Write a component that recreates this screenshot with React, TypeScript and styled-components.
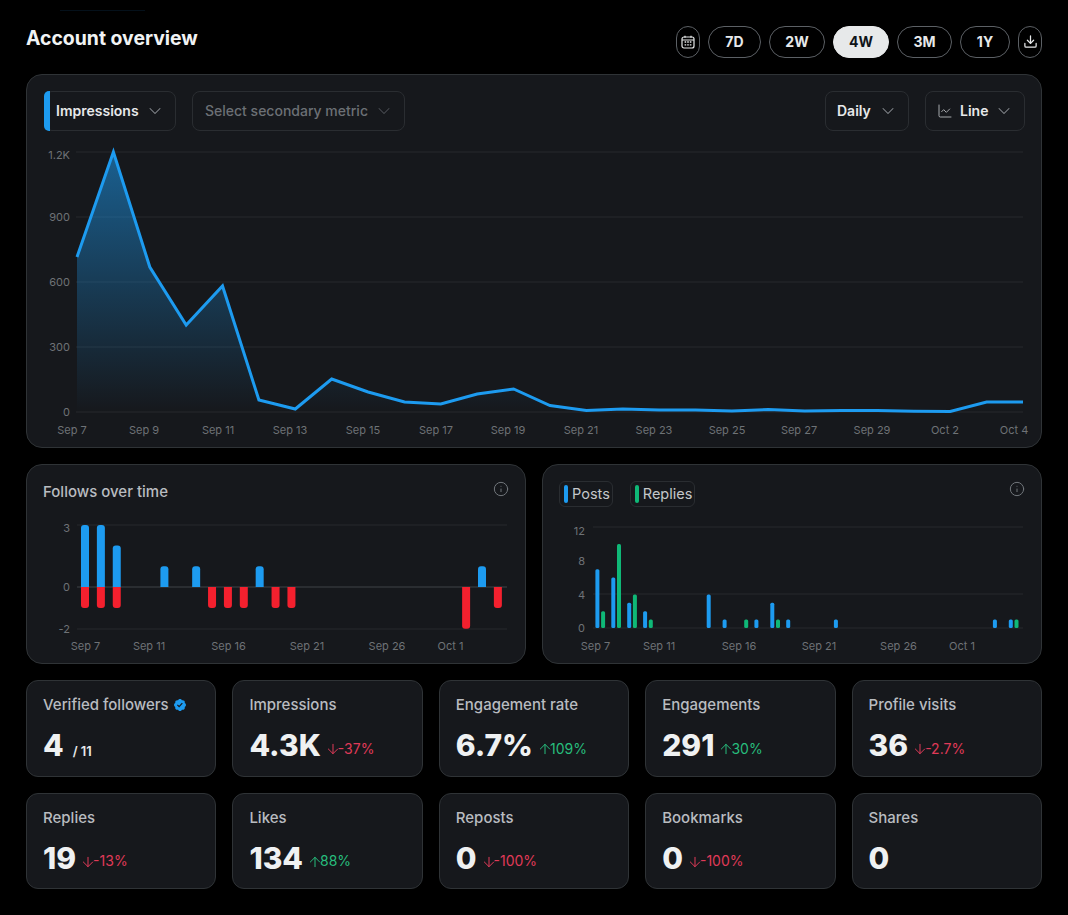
import React from "react";
import styled, { createGlobalStyle } from "styled-components";
import { ArrowDown, ArrowUp, ChartLine, ChevronDown, Download, Info } from "lucide-react";

const Global = createGlobalStyle`
  html, body { margin: 0; padding: 0; background: #000; }
  body { font-family: Inter, "Liberation Sans", sans-serif; color: #e7e9ea; -webkit-font-smoothing: auto; }
  * { box-sizing: border-box; }
`;

const Page = styled.main`
  width: 1068px;
  min-height: 915px;
  padding: 10px 26px 0;
  background: #000;
`;
const TopGlow = styled.div`
  width: 85px;
  height: 1px;
  margin: 0 0 15px 34px;
  background: #04101a;
`;
const Header = styled.header`
  display: flex;
  justify-content: space-between;
  align-items: flex-start;
  height: 32px;
  margin-bottom: 16px;
`;
const Title = styled.h1`
  margin: 0;
  font-size: 19.4px;
  line-height: 24px;
  font-weight: 700;
  color: #f1f3f4;
`;
const Range = styled.nav`
  display: flex;
  gap: 8px;
`;
const Pill = styled.button<{ $active?: boolean; $w: number }>`
  width: ${(p) => p.$w}px;
  height: 32px;
  padding: 0 0 1px;
  display: flex;
  align-items: center;
  justify-content: center;
  border-radius: 16px;
  border: 1px solid ${(p) => (p.$active ? "#e7e9ea" : "#5c6065")};
  background: ${(p) => (p.$active ? "#e7e9ea" : "#000")};
  color: ${(p) => (p.$active ? "#0f1419" : "#e7e9ea")};
  font: 700 14px Inter, "Liberation Sans", sans-serif;
`;
const Card = styled.section`
  background: #16181c;
  border: 1px solid #2f3336;
  border-radius: 16px;
`;
const MainCard = styled(Card)`
  height: 374px;
  margin-bottom: 16px;
`;
const Toolbar = styled.div`
  display: flex;
  justify-content: space-between;
  padding: 16px 16px 0 17px;
`;
const ToolGroup = styled.div`
  display: flex;
  gap: 16px;
`;
const Select = styled.div<{ $w: number; $muted?: boolean }>`
  position: relative;
  width: ${(p) => p.$w}px;
  height: 40px;
  display: flex;
  align-items: center;
  justify-content: space-between;
  padding: 0 10px 1px ${(p) => (p.$muted ? 12 : 11)}px;
  border: 1px solid #2a2d31;
  border-radius: 8px;
  font-size: 14px;
  font-weight: ${(p) => (p.$muted ? 500 : 600)};
  color: ${(p) => (p.$muted ? "#6c7075" : "#e7e9ea")};
  & > svg { color: ${(p) => (p.$muted ? "#4b4f54" : "#8b8f94")}; flex: none; }
`;
const Stripe = styled.span`
  position: absolute;
  left: -1px;
  top: -1px;
  bottom: -1px;
  width: 6px;
  background: #1d9bf0;
  border-radius: 5px 0 0 5px;
`;
const SelectLabel = styled.span`
  display: flex;
  align-items: center;
  gap: 7px;
  svg { color: #c4c7ca; }
`;
const ChartSvg = styled.svg`
  display: block;
`;
const AxisLabel = styled.text`
  font-family: Inter, "Liberation Sans", sans-serif;
  font-size: 11px;
  fill: #6e7276;
`;
const ChartRow = styled.div`
  display: grid;
  grid-template-columns: 500px 500px;
  gap: 16px;
  margin-bottom: 16px;
`;
const ChartCard = styled(Card)`
  height: 200px;
`;
const ChartHead = styled.div`
  height: 45px;
  display: flex;
  justify-content: space-between;
  align-items: flex-start;
  padding: 16px 16px 0 16px;
  & > svg { color: #71767b; flex: none; }
`;
const ChartTitle = styled.h2`
  margin: 2px 0 0;
  font-size: 15px;
  line-height: 18px;
  font-weight: 500;
  color: #b9bcc0;
`;
const Legend = styled.div`
  display: flex;
  gap: 17px;
`;
const Chip = styled.span`
  height: 26px;
  display: flex;
  align-items: center;
  gap: 4px;
  padding: 0 2px 1px 4px;
  border: 1px solid #2a2d31;
  border-radius: 6px;
  font-size: 14.5px;
  color: #c4c7ca;
`;
const ChipMark = styled.i<{ $color: string }>`
  width: 4px;
  height: 18px;
  border-radius: 2px;
  background: ${(p) => p.$color};
`;
const StatGrid = styled.div`
  display: grid;
  grid-template-columns: repeat(5, 1fr);
  grid-auto-rows: 96.5px;
  gap: 16px;
`;
const Stat = styled(Card)`
  padding: 14px 16px;
  border-radius: 12px;
`;
const StatLabel = styled.div`
  display: flex;
  align-items: center;
  gap: 4px;
  font-size: 15px;
  line-height: 20px;
  font-weight: 500;
  color: #b9bcc0;
`;
const StatRow = styled.div`
  display: flex;
  align-items: baseline;
  gap: 6px;
  margin-top: 10px;
`;
const StatValue = styled.span`
  font-size: 30px;
  line-height: 40px;
  font-weight: 800;
  color: #eff1f2;
`;
const StatTotal = styled.span`
  margin-left: 3px;
  font-size: 13px;
  font-weight: 600;
  color: #e7e9ea;
`;
const Delta = styled.span<{ $up: boolean }>`
  display: inline-flex;
  align-items: center;
  font-size: 14px;
  color: ${(p) => (p.$up ? "#27bd7d" : "#e03a58")};
  svg { margin: -2px -3px -2px -2px; position: relative; top: 1px; }
`;

const CalendarIcon = () => (
  <svg width="14" height="14" viewBox="0 0 14 14" fill="none" stroke="#e7e9ea" strokeWidth="1.2">
    <rect x="1" y="2" width="12" height="11" rx="2" />
    <path d="M4 .8v2M10 .8v2M1 5h12" />
    <path d="M3.6 7h1.6M6.2 7h1.6M8.8 7h1.6M3.6 9.8h1.6M6.2 9.8h1.6M8.8 9.8h1.6" strokeWidth="1.3" />
  </svg>
);
const VerifiedIcon = () => (
  <svg width="14" height="14" viewBox="0 0 24 24" fill="#1d9bf0">
    <path d="M22.25 12c0-1.43-.88-2.67-2.19-3.34.46-1.39.2-2.9-.81-3.91s-2.52-1.27-3.91-.81c-.66-1.31-1.91-2.19-3.34-2.19s-2.67.88-3.33 2.19c-1.4-.46-2.91-.2-3.92.81s-1.26 2.52-.8 3.91c-1.31.67-2.2 1.91-2.2 3.34s.89 2.67 2.2 3.34c-.46 1.39-.21 2.9.8 3.91s2.52 1.26 3.91.81c.67 1.31 1.91 2.19 3.34 2.19s2.68-.88 3.34-2.19c1.39.45 2.9.2 3.91-.81s1.27-2.52.81-3.91c1.31-.67 2.19-1.91 2.19-3.34zm-11.71 4.2L6.8 12.46l1.41-1.42 2.26 2.26 4.8-5.23 1.47 1.36-6.2 6.77z" />
  </svg>
);

const lineYs = [257, 152, 267, 325, 286, 400, 409, 379, 392, 402, 404, 394, 389, 405.5, 410.5, 409, 410, 410, 411, 409.5, 411, 410.5, 410.5, 411.3, 411.5, 402, 402];
const linePts = lineYs.map((y, i) => `${(77 + i * 36.385).toFixed(1)},${y}`).join(" ");
const mainY: [string, number][] = [["1.2K", 159], ["900", 221], ["600", 286], ["300", 351], ["0", 416]];
const mainX: [string, number][] = [["Sep 7", 72], ["Sep 9", 144], ["Sep 11", 218], ["Sep 13", 290], ["Sep 15", 363], ["Sep 17", 436], ["Sep 19", 508], ["Sep 21", 581], ["Sep 23", 654], ["Sep 25", 727], ["Sep 27", 799], ["Sep 29", 872], ["Oct 2", 945], ["Oct 4", 1014]];

const MainChart = () => (
  <ChartSvg width="1014" height="316" viewBox="27 131 1014 316">
    <defs>
      <linearGradient id="area" gradientUnits="userSpaceOnUse" x1="0" y1="152" x2="0" y2="412">
        <stop offset="0" stopColor="#1d9bf0" stopOpacity="0.55" />
        <stop offset="1" stopColor="#1d9bf0" stopOpacity="0" />
      </linearGradient>
    </defs>
    {[152, 217, 282, 347, 412].map((y) => (
      <line key={y} x1="76" x2="1023" y1={y} y2={y} stroke="#26292d" />
    ))}
    {mainY.map(([t, y]) => (
      <AxisLabel key={t} x="70" y={y} textAnchor="end">{t}</AxisLabel>
    ))}
    {mainX.map(([t, x]) => (
      <AxisLabel key={t} x={x} y="434" textAnchor="middle">{t}</AxisLabel>
    ))}
    <polygon points={`77,412 ${linePts} 1023,412`} fill="url(#area)" />
    <polyline points={linePts} fill="none" stroke="#1d9bf0" strokeWidth="3" strokeLinejoin="miter" />
  </ChartSvg>
);

const barTop = (x: number, y0: number, h: number, w: number, r: number) =>
  `M${x} ${y0}V${y0 - h + r}Q${x} ${y0 - h} ${x + r} ${y0 - h}H${x + w - r}Q${x + w} ${y0 - h} ${x + w} ${y0 - h + r}V${y0}Z`;
const barBottom = (x: number, y0: number, h: number, w: number, r: number) =>
  `M${x} ${y0}V${y0 + h - r}Q${x} ${y0 + h} ${x + r} ${y0 + h}H${x + w - r}Q${x + w} ${y0 + h} ${x + w} ${y0 + h - r}V${y0}Z`;

const followsUp: [number, number][] = [[0, 3], [1, 3], [2, 2], [5, 1], [7, 1], [11, 1], [25, 1]];
const followsDown: [number, number][] = [[0, 1], [1, 1], [2, 1], [8, 1], [9, 1], [10, 1], [12, 1], [13, 1], [24, 2], [26, 1]];
const followsX: [string, number][] = [["Sep 7", 85.5], ["Sep 11", 149], ["Sep 16", 228.5], ["Sep 21", 307], ["Sep 26", 387], ["Oct 1", 450.5]];

const FollowsChart = () => (
  <ChartSvg width="498" height="153" viewBox="27 510 498 153">
    <line x1="77" x2="507" y1="525" y2="525" stroke="#26292d" />
    <line x1="77" x2="507" y1="629" y2="629" stroke="#26292d" />
    <line x1="77" x2="507" y1="587" y2="587" stroke="#3f4246" />
    <AxisLabel x="70" y="532" textAnchor="end">3</AxisLabel>
    <AxisLabel x="70" y="591" textAnchor="end">0</AxisLabel>
    <AxisLabel x="70" y="633" textAnchor="end">-2</AxisLabel>
    {followsX.map(([t, x]) => (
      <AxisLabel key={t} x={x} y="650" textAnchor="middle">{t}</AxisLabel>
    ))}
    {followsUp.map(([i, v]) => (
      <path key={i} d={barTop(81 + i * 15.88, 587, v * 20.7, 8, 3)} fill="#1d9bf0" />
    ))}
    {followsDown.map(([i, v]) => (
      <path key={i} d={barBottom(81 + i * 15.88, 587, v * 20.9, 8, 3)} fill="#f4202e" />
    ))}
  </ChartSvg>
);

const posts: [number, number][] = [[0, 7], [1, 6], [2, 3], [3, 2], [7, 4], [8, 1], [10, 1], [11, 3], [12, 1], [15, 1], [25, 1], [26, 1]];
const replies: [number, number][] = [[0, 2], [1, 10], [2, 4], [3, 1], [9, 1], [11, 1], [26, 1]];
const postsX: [string, number][] = [["Sep 7", 595.5], ["Sep 11", 659], ["Sep 16", 739], ["Sep 21", 819], ["Sep 26", 898.5], ["Oct 1", 962]];

const PostsChart = () => (
  <ChartSvg width="498" height="153" viewBox="543 510 498 153">
    {[527, 594, 628].map((y) => (
      <line key={y} x1="593" x2="1023" y1={y} y2={y} stroke="#26292d" />
    ))}
    <AxisLabel x="585" y="535" textAnchor="end">12</AxisLabel>
    <AxisLabel x="585" y="565" textAnchor="end">8</AxisLabel>
    <AxisLabel x="585" y="599" textAnchor="end">4</AxisLabel>
    <AxisLabel x="585" y="632" textAnchor="end">0</AxisLabel>
    {postsX.map(([t, x]) => (
      <AxisLabel key={t} x={x} y="650" textAnchor="middle">{t}</AxisLabel>
    ))}
    {posts.map(([i, v]) => (
      <rect key={i} x={595.4 + i * 15.9} y={628 - v * 8.4} width="4" height={v * 8.4} rx="1.5" fill="#1d9bf0" />
    ))}
    {replies.map(([i, v]) => (
      <rect key={i} x={601.1 + i * 15.9} y={628 - v * 8.4} width="4" height={v * 8.4} rx="1.5" fill="#0fb877" />
    ))}
  </ChartSvg>
);

type StatData = { label: string; value: string; delta?: string; up?: boolean; total?: string; badge?: boolean };
const stats: StatData[] = [
  { label: "Verified followers", value: "4", total: "/ 11", badge: true },
  { label: "Impressions", value: "4.3K", delta: "-37%", up: false },
  { label: "Engagement rate", value: "6.7%", delta: "109%", up: true },
  { label: "Engagements", value: "291", delta: "30%", up: true },
  { label: "Profile visits", value: "36", delta: "-2.7%", up: false },
  { label: "Replies", value: "19", delta: "-13%", up: false },
  { label: "Likes", value: "134", delta: "88%", up: true },
  { label: "Reposts", value: "0", delta: "-100%", up: false },
  { label: "Bookmarks", value: "0", delta: "-100%", up: false },
  { label: "Shares", value: "0" },
];

const ranges: [string, number][] = [["7D", 53], ["2W", 56], ["4W", 56], ["3M", 55], ["1Y", 50]];

export default function App() {
  return (
    <Page>
      <Global />
      <TopGlow />
      <Header>
        <Title>Account overview</Title>
        <Range>
          <Pill $w={24} aria-label="Calendar"><CalendarIcon /></Pill>
          {ranges.map(([r, w]) => (
            <Pill key={r} $w={w} $active={r === "4W"}>{r}</Pill>
          ))}
          <Pill $w={24} aria-label="Download"><Download size={15} strokeWidth={2} /></Pill>
        </Range>
      </Header>

      <MainCard>
        <Toolbar>
          <ToolGroup>
            <Select $w={132}>
              <Stripe />
              <SelectLabel>Impressions</SelectLabel>
              <ChevronDown size={20} strokeWidth={1.25} />
            </Select>
            <Select $w={213} $muted>
              <SelectLabel>Select secondary metric</SelectLabel>
              <ChevronDown size={20} strokeWidth={1.25} />
            </Select>
          </ToolGroup>
          <ToolGroup>
            <Select $w={84}>
              <SelectLabel>Daily</SelectLabel>
              <ChevronDown size={20} strokeWidth={1.25} />
            </Select>
            <Select $w={100}>
              <SelectLabel><ChartLine size={16} strokeWidth={1.25} />Line</SelectLabel>
              <ChevronDown size={20} strokeWidth={1.25} />
            </Select>
          </ToolGroup>
        </Toolbar>
        <MainChart />
      </MainCard>

      <ChartRow>
        <ChartCard>
          <ChartHead>
            <ChartTitle>Follows over time</ChartTitle>
            <Info size={16} strokeWidth={1.5} />
          </ChartHead>
          <FollowsChart />
        </ChartCard>
        <ChartCard>
          <ChartHead>
            <Legend>
              <Chip><ChipMark $color="#1d9bf0" />Posts</Chip>
              <Chip><ChipMark $color="#0fb877" />Replies</Chip>
            </Legend>
            <Info size={16} strokeWidth={1.5} />
          </ChartHead>
          <PostsChart />
        </ChartCard>
      </ChartRow>

      <StatGrid>
        {stats.map((s) => (
          <Stat key={s.label}>
            <StatLabel>
              {s.label}
              {s.badge && <VerifiedIcon />}
            </StatLabel>
            <StatRow>
              <StatValue>{s.value}</StatValue>
              {s.total && <StatTotal>{s.total}</StatTotal>}
              {s.delta && (
                <Delta $up={!!s.up}>
                  {s.up ? <ArrowUp size={16} strokeWidth={1.5} /> : <ArrowDown size={16} strokeWidth={1.5} />}
                  {s.delta}
                </Delta>
              )}
            </StatRow>
          </Stat>
        ))}
      </StatGrid>
    </Page>
  );
}
